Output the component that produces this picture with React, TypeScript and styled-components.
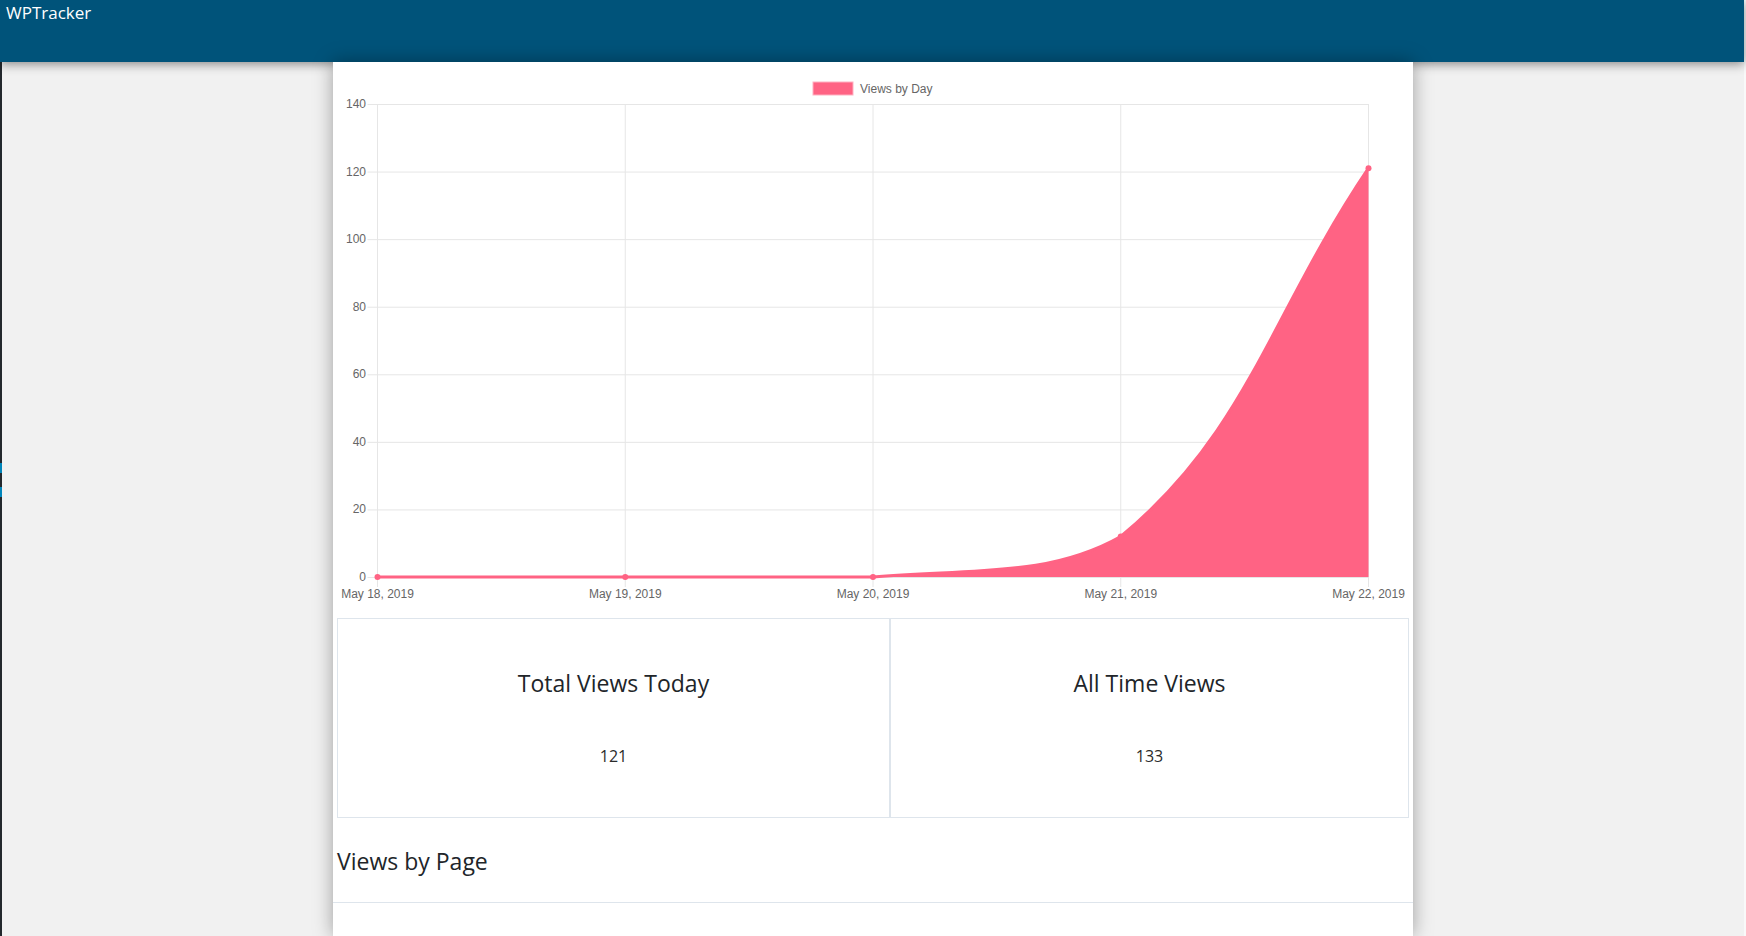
import React from "react";
import styled, { createGlobalStyle } from "styled-components";

const GlobalStyle = createGlobalStyle`
  html, body {
    margin: 0;
    padding: 0;
    background: #f1f1f1;
  }
  body {
    font-family: "Open Sans", "Noto Sans", sans-serif;
    color: #212529;
  }
`;

const Page = styled.div`
  display: flex;
  flex-direction: column;
  min-height: 100vh;
  border-right: 2px solid #f9f9f9;
`;

const Header = styled.header`
  height: 62px;
  box-sizing: border-box;
  padding: 1px 0 0 6px;
  background: #00537a;
  color: #fff;
  font-size: 17px;
  line-height: 24px;
  box-shadow: 0 2px 10px rgba(0, 0, 0, 0.45);
  position: relative;
  z-index: 1;
`;

const Body = styled.div`
  display: flex;
  flex: 1;
`;

const Strip = styled.div`
  width: 2px;
  background: #23282d;
  display: flex;
  flex-direction: column;
  gap: 14px;
  padding-top: 401px;
`;

const Mark = styled.span`
  height: 10px;
  background: #0085ba;
`;

const Main = styled.main`
  flex: 1;
  display: flex;
  justify-content: center;
`;

const Panel = styled.section`
  width: 1080px;
  background: #fff;
  box-shadow: 0 0 18px rgba(0, 0, 0, 0.35);
  position: relative;
  z-index: 2;
`;

const ChartSvg = styled.svg`
  display: block;
  font-family: "Liberation Sans", Arial, sans-serif;
  font-size: 12px;
`;

const Stats = styled.div`
  display: grid;
  grid-template-columns: 553px 519px;
  margin: 4px 4px 0;
`;

const StatCard = styled.div`
  height: 200px;
  box-sizing: border-box;
  border: 1px solid #dee5ec;
  text-align: center;
  padding-top: 50px;
`;

const StatTitle = styled.h4`
  margin: 0 0 47px;
  font-size: 23px;
  font-weight: 500;
  line-height: 28px;
`;

const StatValue = styled.p`
  margin: 0;
  font-size: 16px;
  line-height: 24px;
  color: #2b2b2b;
`;

const SectionTitle = styled.h4`
  margin: 29px 4px 0;
  font-size: 23px;
  font-weight: 500;
  line-height: 28px;
`;

const Divider = styled.div`
  height: 1px;
  background: #dee5ec;
  margin-top: 27px;
`;

const PINK = "#ff6384";
const GRID = "#e6e6e6";
const LEFT = 44.5;
const STEP = 247.75;
const TOP = 42;
const BOTTOM = 515;
const MAX = 140;

const labels = ["May 18, 2019", "May 19, 2019", "May 20, 2019", "May 21, 2019", "May 22, 2019"];
const values = [0, 0, 0, 12, 121];

const yOf = (v: number) => BOTTOM - (v * (BOTTOM - TOP)) / MAX;

// same bezier spline chart.js uses (tension 0.4, capped to the chart area)
const splinePath = (pts: { x: number; y: number }[]) => {
  const right = LEFT + STEP * (pts.length - 1);
  const cap = (p: { x: number; y: number }) => ({
    x: Math.min(right, Math.max(LEFT, p.x)),
    y: Math.min(BOTTOM, Math.max(TOP, p.y)),
  });
  const cps = pts.map((cur, i) => {
    const prev = pts[i - 1] || cur;
    const next = pts[i + 1] || cur;
    const d01 = Math.hypot(cur.x - prev.x, cur.y - prev.y);
    const d12 = Math.hypot(next.x - cur.x, next.y - cur.y);
    const s01 = d01 + d12 ? d01 / (d01 + d12) : 0;
    const s12 = d01 + d12 ? d12 / (d01 + d12) : 0;
    const fa = 0.4 * s01;
    const fb = 0.4 * s12;
    return {
      a: cap({ x: cur.x - fa * (next.x - prev.x), y: cur.y - fa * (next.y - prev.y) }),
      b: cap({ x: cur.x + fb * (next.x - prev.x), y: cur.y + fb * (next.y - prev.y) }),
    };
  });
  let d = `M${pts[0].x},${pts[0].y}`;
  for (let i = 1; i < pts.length; i++) {
    const c1 = cps[i - 1].b;
    const c2 = cps[i].a;
    d += ` C${c1.x},${c1.y} ${c2.x},${c2.y} ${pts[i].x},${pts[i].y}`;
  }
  return d;
};

const ViewsChart = () => {
  const pts = values.map((v, i) => ({ x: LEFT + i * STEP, y: yOf(v) }));
  const line = splinePath(pts);
  const last = pts[pts.length - 1];
  const ticks = [0, 20, 40, 60, 80, 100, 120, 140];

  return (
    <ChartSvg width={1080} height={552} viewBox="0 0 1080 552">
      <rect x={480} y={20} width={40} height={13} fill={PINK} stroke="#ffb1c1" strokeWidth={1} />
      <text x={527} y={31} fill="#666">
        Views by Day
      </text>

      {ticks.map((t) => (
        <g key={t}>
          <line x1={34.5} x2={last.x} y1={yOf(t) + 0.5} y2={yOf(t) + 0.5} stroke={GRID} />
          <text x={33} y={yOf(t) + 4} textAnchor="end" fill="#666">
            {t}
          </text>
        </g>
      ))}

      {labels.map((l, i) => (
        <g key={l}>
          <line x1={pts[i].x} x2={pts[i].x} y1={TOP} y2={BOTTOM + 10} stroke={GRID} />
          <text x={pts[i].x} y={536} textAnchor="middle" fill="#666">
            {l}
          </text>
        </g>
      ))}

      <path d={`${line} L${last.x},${BOTTOM} L${LEFT},${BOTTOM} Z`} fill={PINK} />
      <path d={line} fill="none" stroke={PINK} strokeWidth={3} />
      {pts.map((p, i) => (
        <circle key={i} cx={p.x} cy={p.y} r={3} fill={PINK} />
      ))}
    </ChartSvg>
  );
};

const stats = [
  { title: "Total Views Today", value: 121 },
  { title: "All Time Views", value: 133 },
];

const App = () => {
  return (
    <>
      <GlobalStyle />
      <Page>
        <Header>WPTracker</Header>
        <Body>
          <Strip>
            <Mark />
            <Mark />
          </Strip>
          <Main>
            <Panel>
              <ViewsChart />
              <Stats>
                {stats.map(({ title, value }) => (
                  <StatCard key={title}>
                    <StatTitle>{title}</StatTitle>
                    <StatValue>{value}</StatValue>
                  </StatCard>
                ))}
              </Stats>
              <SectionTitle>Views by Page</SectionTitle>
              <Divider />
            </Panel>
          </Main>
        </Body>
      </Page>
    </>
  );
};

export default App;
